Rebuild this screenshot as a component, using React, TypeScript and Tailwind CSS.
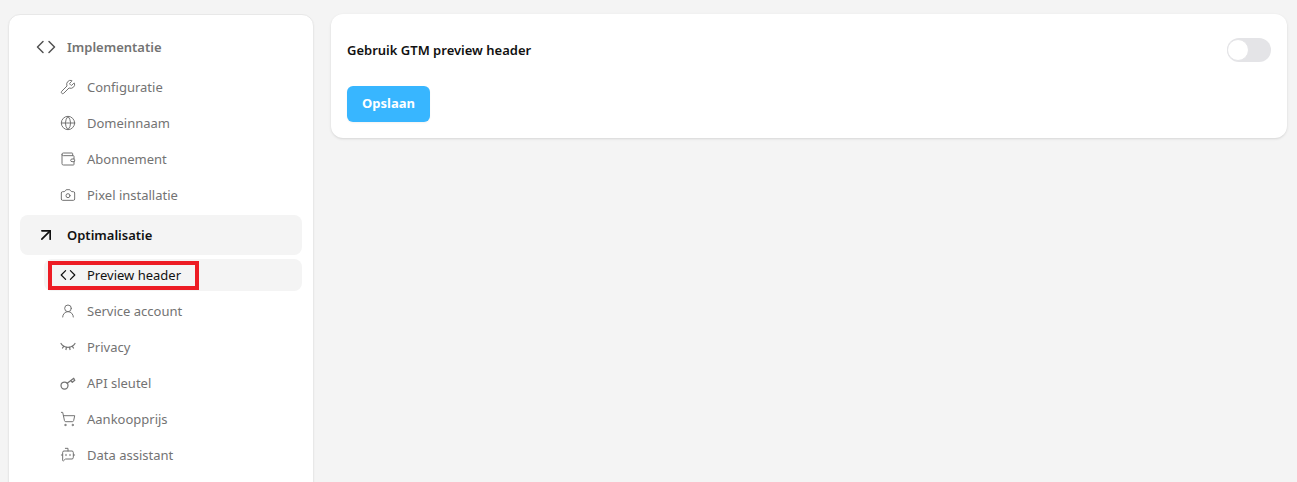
import { ArrowUpRight, BotMessageSquare, Camera, Globe, ShoppingCart, UserRound, Wallet, Wrench } from 'lucide-react';
import type { ReactNode } from 'react';

function CodeIcon({ className }: { className?: string }) {
  return (
    <svg viewBox="0 0 20 20" fill="none" stroke="currentColor" strokeWidth="1.5" strokeLinecap="round" strokeLinejoin="round" className={className}>
      <path d="M7 4.500 1.500 10 7 15.500" />
      <path d="M13 4.500 18.500 10 13 15.500" />
    </svg>
  );
}

function LashesIcon({ className }: { className?: string }) {
  return (
    <svg viewBox="0 0 16 16" fill="none" stroke="currentColor" strokeWidth="1.25" strokeLinecap="round" className={className}>
      <path d="M1 4.500c3 5 11 5 14 0" />
      <path d="M3.700 7.300 2.500 9M6.400 8.400 6 10.500M9.600 8.400l.4 2.100M12.300 7.300l1.200 1.700" />
    </svg>
  );
}

function KeyIcon({ className }: { className?: string }) {
  return (
    <svg viewBox="0 0 16 16" fill="none" stroke="currentColor" strokeWidth="1.25" strokeLinecap="round" strokeLinejoin="round" className={className}>
      <circle cx="4.500" cy="10.500" r="3.500" />
      <path d="M7.200 8.300 13.800 3.300" />
      <path d="m10.800 5.600 1.500 1.700 2.500-2-1.200-1.800" />
    </svg>
  );
}

const implementatie = [
  { label: 'Configuratie', icon: <Wrench className="size-4" strokeWidth={1.5} /> },
  { label: 'Domeinnaam', icon: <Globe className="size-4" strokeWidth={1.5} /> },
  { label: 'Abonnement', icon: <Wallet className="size-4" strokeWidth={1.5} /> },
  { label: 'Pixel installatie', icon: <Camera className="size-4" strokeWidth={1.5} /> },
];

const optimalisatie = [
  { label: 'Service account', icon: <UserRound className="size-4" strokeWidth={1.5} /> },
  { label: 'Privacy', icon: <LashesIcon className="size-4" /> },
  { label: 'API sleutel', icon: <KeyIcon className="size-4" /> },
  { label: 'Aankoopprijs', icon: <ShoppingCart className="size-4" strokeWidth={1.5} /> },
  { label: 'Data assistant', icon: <BotMessageSquare className="size-4" strokeWidth={1.5} /> },
];

function SubItem({ label, icon }: { label: string; icon: ReactNode }) {
  return (
    <a className="flex h-8 items-center gap-[11px] rounded-lg pl-4 text-[13px] text-[#737373]">
      {icon}
      <span className="pt-0.5">{label}</span>
    </a>
  );
}

export default function App() {
  return (
    <div className="flex h-[482px] items-start gap-[17px] overflow-hidden bg-[#f4f4f4] pt-3.5 pr-2.5 pl-2 font-['Noto_Sans','Open_Sans',sans-serif]">
      <aside className="h-[500px] w-[306px] shrink-0 rounded-xl border border-[#e8e8e8] bg-white px-[11px] py-3 shadow-xs">
        <div className="flex h-10 items-center gap-[11px] rounded-lg pl-4 text-[13px] font-semibold text-[#737373]">
          <CodeIcon className="size-5 text-[#525252]" />
          <span className="pt-0.5">Implementatie</span>
        </div>
        <div className="mt-1 flex flex-col gap-1 pl-6">
          {implementatie.map((item) => (
            <SubItem key={item.label} {...item} />
          ))}
        </div>
        <div className="mt-1 flex h-10 items-center gap-[11px] rounded-lg bg-[#f4f4f4] pl-4 text-[13px] font-semibold text-[#111111]">
          <ArrowUpRight className="size-5" strokeWidth={2} />
          <span className="pt-0.5">Optimalisatie</span>
        </div>
        <div className="mt-1 flex flex-col gap-1 pl-6">
          <a className="relative flex h-8 items-center gap-[11px] rounded-lg bg-[#f4f4f4] pl-4 text-[13px] text-[#111111]">
            <CodeIcon className="size-4" />
            <span className="pt-0.5">Preview header</span>
            <div className="absolute top-0.5 left-1 h-[29px] w-[151px] border-4 border-[#ed1c24]" />
          </a>
          {optimalisatie.map((item) => (
            <SubItem key={item.label} {...item} />
          ))}
        </div>
      </aside>
      <main className="flex-1 rounded-xl bg-white px-4 pt-6 pb-4 shadow-sm">
        <div className="flex h-6 items-center justify-between">
          <span className="pt-0.5 text-[13px] font-semibold text-[#111111]">Gebruik GTM preview header</span>
          <div className="flex h-6 w-11 items-center rounded-full bg-[#e4e4e7]">
            <div className="size-[22px] rounded-full border border-[#e4e4e7] bg-white" />
          </div>
        </div>
        <button className="mt-6 h-9 w-[83px] rounded-md bg-[#38b6ff] text-[13px] font-bold text-white shadow-xs">Opslaan</button>
      </main>
    </div>
  );
}
